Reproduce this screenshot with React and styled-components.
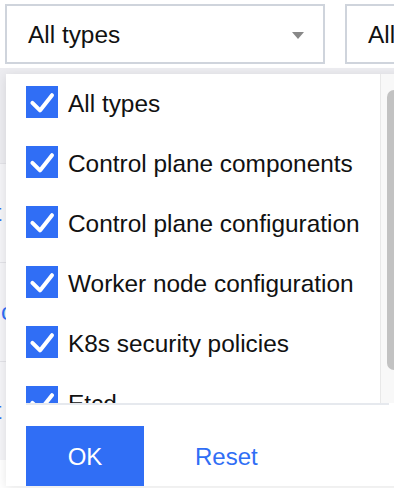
import React from 'react'
import styled, { createGlobalStyle } from 'styled-components'

const BLUE = '#306ef5'

const types = [
  'All types',
  'Control plane components',
  'Control plane configuration',
  'Worker node configuration',
  'K8s security policies',
  'Etcd',
]

const rows = [
  { text: 'Edit', shift: -40 },
  { text: 'co', shift: 1 },
  { text: 'Edit', shift: -40 },
]

export default function App() {
  return (
    <Page>
      <GlobalStyle />
      <Toolbar>
        <Select>
          <span>All types</span>
          <ArrowDown />
        </Select>
        <Select>
          <span>All</span>
          <ArrowDown />
        </Select>
      </Toolbar>

      <Table>
        <HeaderRow />
        {rows.map((r, i) => (
          <Row key={i}>
            <LinkText style={{ marginLeft: r.shift }}>{r.text}</LinkText>
          </Row>
        ))}
      </Table>

      <Dropdown>
        <ListWrap>
          <List>
            {types.map((t) => (
              <Item key={t}>
                <Checkbox>
                  <svg width="32" height="32" viewBox="0 0 16 16">
                    <polyline
                      points="3.2,8.4 7,12.2 13,4.6"
                      fill="none"
                      stroke="#fff"
                      strokeWidth="2"
                      strokeLinecap="round"
                      strokeLinejoin="round"
                    />
                  </svg>
                </Checkbox>
                <Label>{t}</Label>
              </Item>
            ))}
          </List>
          <ScrollTrack>
            <Thumb />
          </ScrollTrack>
        </ListWrap>
        <Footer>
          <OkButton>OK</OkButton>
          <ResetButton>Reset</ResetButton>
        </Footer>
      </Dropdown>
    </Page>
  )
}

function ArrowDown() {
  return (
    <svg width="12" height="7" viewBox="0 0 12 7">
      <polygon points="0,0 12,0 6,7" fill="#888" />
    </svg>
  )
}

const GlobalStyle = createGlobalStyle`
  html, body {
    margin: 0;
    padding: 0;
    background: #fff;
    overflow: hidden;
  }
  body {
    font-family: "Liberation Sans", Arial, Helvetica, sans-serif;
    color: #111;
  }
`

const Page = styled.div`
  position: relative;
  width: 394px;
  height: 488px;
  overflow: hidden;
  background: #fff;
`

const Toolbar = styled.div`
  display: flex;
  gap: 20px;
  padding: 4px 0 0 5px;
`

const Select = styled.div`
  flex-shrink: 0;
  box-sizing: border-box;
  width: 320px;
  height: 60px;
  border: 2px solid #cfd4dc;
  background: #fff;
  display: flex;
  align-items: center;
  justify-content: space-between;
  padding: 2px 19px 0 21px;
  font-size: 24.4px;
  color: #111;
`

const Table = styled.div`
  margin-top: 4px;
  background: #f4f4f7;
`

const HeaderRow = styled.div`
  height: 95px;
  background: #ececf0;
`

const Row = styled.div`
  height: 98px;
  border-top: 1px solid #e2e2e7;
  display: flex;
  align-items: center;
  overflow: hidden;
`

const LinkText = styled.span`
  font-size: 24px;
  color: ${BLUE};
  white-space: nowrap;
`

const Dropdown = styled.div`
  position: absolute;
  left: 6px;
  top: 74px;
  width: 400px;
  background: #fff;
  box-shadow: 0 2px 10px rgba(0, 0, 0, 0.1);
`

const ListWrap = styled.div`
  display: flex;
  height: 329px;
`

const List = styled.div`
  width: 374px;
  overflow: hidden;
  border-right: 1px solid #e8e8e8;
`

const Item = styled.div`
  box-sizing: border-box;
  height: 60px;
  padding: 12px 0 16px 20px;
  display: flex;
  align-items: center;
  gap: 10px;
`

const Checkbox = styled.span`
  flex-shrink: 0;
  width: 32px;
  height: 32px;
  background: ${BLUE};
  display: flex;
  align-items: center;
  justify-content: center;
`

const Label = styled.span`
  padding-top: 4px;
  font-size: 24.4px;
  color: #111;
  white-space: nowrap;
`

const ScrollTrack = styled.div`
  flex: 1;
  background: #f8f8f8;
  padding: 16px 0 0 6px;
`

const Thumb = styled.div`
  width: 14px;
  height: 280px;
  border-radius: 7px;
  background: #c2c2c2;
`

const Footer = styled.div`
  display: flex;
  align-items: center;
  margin: 0 17px 0 20px;
  padding-top: 21px;
  border-top: 2px solid #e6e9ee;
`

const OkButton = styled.button`
  width: 118px;
  height: 60px;
  border: none;
  background: ${BLUE};
  color: #fff;
  font-family: inherit;
  font-size: 24px;
  padding: 2px 0 0;
`

const ResetButton = styled.button`
  margin-left: 51px;
  border: none;
  background: none;
  padding: 2px 0 0;
  color: ${BLUE};
  font-family: inherit;
  font-size: 24px;
`
